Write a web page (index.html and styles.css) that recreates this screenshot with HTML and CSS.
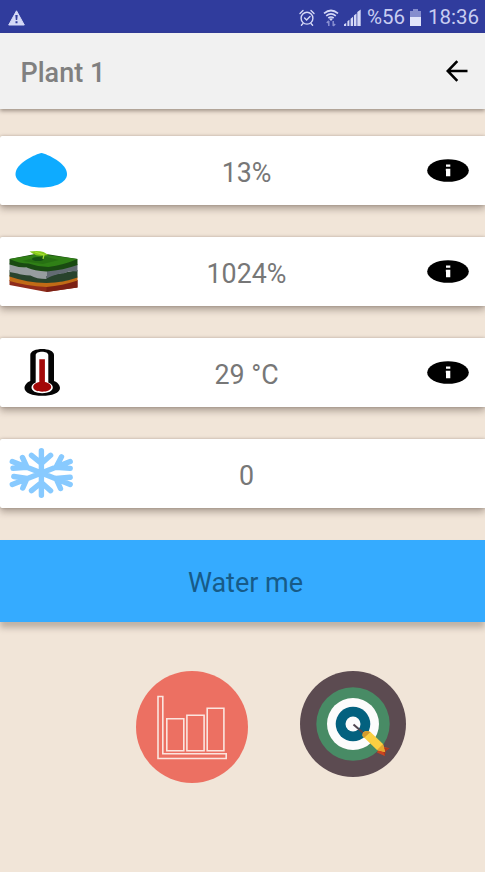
FILE: index.html
```html
<!DOCTYPE html>
<html lang="en">
<head>
<meta charset="utf-8">
<title>Plant 1</title>
<link rel="stylesheet" href="styles.css">
</head>
<body>
<div class="status">
  <svg class="warn" width="17" height="16" viewBox="0 0 17 16"><path d="M8.5 .8 16.3 15H.7Z" fill="#d5d9f6" stroke="#d5d9f6" stroke-linejoin="round"/><path d="M7.3 5h2.4l-.5 5H7.8zM7.5 11.2h2v2h-2z" fill="#303c9d"/></svg>
  <svg class="alarm" width="16" height="18" viewBox="0 0 16 18" fill="none" stroke="#d5d9f6" stroke-width="1.4" stroke-linecap="round"><circle cx="8" cy="9.2" r="5.9"/><path d="m5.6 9 2 2 3.4-3.6M1 4.4 4 1.6M12 1.6l3 2.8M4 14.5l-1.6 1.8M12 14.5l1.6 1.8"/></svg>
  <svg class="wifi" width="16" height="18" viewBox="0 0 16 18" fill="none" stroke="#d5d9f6" stroke-width="1.7"><path d="M1 4.3Q8-1.3 15 4.3M3.2 6.800Q8 3 12.800 6.800M5.300 9Q8 7 10.700 9"/><path d="m8 12-2-2.200Q8 8.700 10 9.800Z" fill="#d5d9f6" stroke="none"/><path d="M5.800 17v-5M3.800 14l2-2.200M10.200 12v5M12.200 15l-2 2" stroke="#8990d0" stroke-width="1.500"/></svg>
  <svg class="signal" width="17" height="17" viewBox="0 0 17 17" fill="#d5d9f6"><path d="M0 17v-1.800L2.200 14v3zM3.400 17v-4.700l2-1.500V17zM6.600 17v-7.300l2.400-2V17zM9.900 17V6.500l2.600-2V17zM13.300 17V3L16.700.5V17z"/></svg>
  <span class="percent">%56</span>
  <svg class="battery" width="11" height="17" viewBox="0 0 11 17"><path d="M3 0h5v2h3v6H0V2h3z" fill="#858dce"/><path d="M0 8h11v9H0z" fill="#e1e4fa"/></svg>
  <span class="time">18:36</span>
</div>
<header class="bar">
  <h1>Plant 1</h1>
  <svg width="22" height="22" viewBox="0 0 22 22" fill="none" stroke="#000" stroke-width="2.6"><path d="M21.500 11H2M11.300 1.200 1.700 11l9.600 9.800"/></svg>
</header>
<main>
  <section class="card">
    <svg width="83" height="69" viewBox="0 0 83 69"><path d="M41.500 17C47 18 67 27 67 38c0 9-13 13.500-25.700 13.500S15.500 47 15.500 38C15.500 27 36 18 41.500 17Z" fill="#0eabff"/></svg>
    <span>13%</span>
    <svg class="info" width="42" height="24" viewBox="0 0 42 24"><ellipse cx="21" cy="11.500" rx="20.800" ry="11.300"/><path d="M19 5.500h4.300v2.300H19zM18.800 9.800h4.500v7.500H19v-5.500h-.2z" fill="#fff"/></svg>
  </section>
  <section class="card">
    <svg width="83" height="69" viewBox="0 0 83 69">
      <path d="m9.500 43 37.200 6 30.800-6v7.500L46.500 55 9.500 48z" fill="#8f2c1b"/>
      <path d="m46.500 49 31-6v7.500l-31 4.500z" fill="#7c2014"/>
      <path d="M9.500 38q18 7 37 7t31-5.500v4q-15 5-31 6.500-20-1-37-6z" fill="#c16b16"/>
      <path d="M9.500 33q18 5 37 6l31-6v7.500q-14 5-31 5.500-20-.5-37-6.500z" fill="#28432c"/>
      <path d="M9.500 26q18 6 37 7v9q-10 0-16-3.500-9-.5-13-2-4-1-8-1.500z" fill="#979d9f"/>
      <path d="m46.500 33 31-6v7.500q-8-1-14 2-7 0-17 5z" fill="#626b72"/>
      <path d="M9.500 22 40 16l37.500 6v6q-14 5-31 6.500-12-.5-20-4-9 0-17-3z" fill="#194a11"/>
      <path d="m9.500 22 30-5 38 5q-14 6-29 8-10 0-20-3.500-9 0-19-4.500z" fill="#2f7f16"/>
      <path d="m22 24 20-5 17 4-16 4z" fill="#277013"/>
      <ellipse cx="38" cy="22" rx="6" ry="2" fill="#145013"/>
      <path d="M29.500 14.500q9-1 14 .5l5 3-5 .5q-7 1-10-1.500z" fill="#83c81c"/>
      <path d="m35 15 9 3-1 4" fill="none" stroke="#a7df32" stroke-width="1.200"/>
    </svg>
    <span>1024%</span>
    <svg class="info" width="42" height="24" viewBox="0 0 42 24"><ellipse cx="21" cy="11.500" rx="20.800" ry="11.300"/><path d="M19 5.500h4.300v2.300H19zM18.800 9.800h4.500v7.500H19v-5.500h-.2z" fill="#fff"/></svg>
  </section>
  <section class="card">
    <svg width="83" height="69" viewBox="0 0 83 69"><path d="M30.300 17c0-8 23.700-8 23.700 0v26c3 1 6 4 6 7 0 5-8 7.800-17.800 7.800S24.500 55 24.500 50c0-3 3-6 5.800-7Z" fill="#050505"/><path d="M35.700 17c0-4.500 12.600-4.500 12.600 0v27.500c3 1 4.500 3 4.500 5 0 3.500-4.500 5.700-10.600 5.700S31.500 53 31.500 49.500c0-2 1.200-4 4.200-5Z" fill="#fff"/><path d="M39.300 21.200h5.600V44c3.500.5 6.300 2.500 6.300 5 0 3-4 4.700-9 4.700s-9-1.700-9-4.700c0-2.500 2.800-4.500 6.100-5z" fill="#a30808"/></svg>
    <span>29 °C</span>
    <svg class="info" width="42" height="24" viewBox="0 0 42 24"><ellipse cx="21" cy="11.500" rx="20.800" ry="11.300"/><path d="M19 5.500h4.300v2.300H19zM18.800 9.800h4.500v7.500H19v-5.500h-.2z" fill="#fff"/></svg>
  </section>
  <section class="card">
    <svg width="83" height="69" viewBox="0 0 83 69" fill="none" stroke="#88caff" stroke-width="5.400" stroke-linecap="round" stroke-linejoin="round"><path d="M41.400 11.700v44.600M31.500 16.300l9.900 8.200 9.200-8.200M31.500 51.700l9.900-8.200 9.200 8.200"/><path d="M12.300 22.500 41.400 34 70.200 45.500M22.500 18.500l4.500 9.700-14 1M70.200 38.300 56 39.500l4.500 10M70.200 22.500 41.400 34 12.300 45.500M61.500 17.800 56 28.200l14.200 1.200M13.800 37.500l13.200 2-4.200 9.500"/></svg>
    <span>0</span>
  </section>
  <button class="water">Water me</button>
  <nav class="actions">
    <svg width="112" height="112" viewBox="0 0 112 112"><circle cx="56" cy="56" r="56" fill="#ec7062"/><path d="M22 25.500h4.800v57.300h63.400v4.700H22zM30.800 47.800h17v32h-17zM50.900 44.300h17.200v35.500H50.900zM71.200 37.200h16.700v42.600H71.200z" fill="none" stroke="#fbe5df" stroke-width="1.600"/></svg>
    <svg width="106" height="106" viewBox="0 0 106 106"><circle cx="53" cy="53" r="53" fill="#5c4b51"/><circle cx="53" cy="53" r="36.700" fill="#488b65"/><circle cx="53" cy="53" r="26" fill="#fcfcfc"/><circle cx="53" cy="53" r="17.300" fill="#03617f"/><circle cx="53" cy="53" r="7.500" fill="#fcfcfc"/><path d="m53.500 53.500 11 9.500" stroke="#514650" stroke-width="2"/><path d="m80 75 9.500 2.200-4 2.800-.7 5-7.800-3.500z" fill="#ca4521"/><path d="m82 77 7.500.2-4 2.800-.7 5z" fill="#ad371d"/><path d="M62.500 65q-.5-5 5-5l3 1L83 73l2 8-8-2z" fill="#fbcf42"/><path d="M62.500 65q-.5-5 5-5l3 1-6.500 6z" fill="#d69a2d"/><path d="m83 73 2 8-8-2z" fill="#e6a62e"/></svg>
  </nav>
</main>
</body>
</html>
```

FILE: styles.css
```css
* { box-sizing: border-box; }
body {
  margin: 0;
  min-height: 872px;
  background: #f1e5d8;
  color: #777;
  font-family: Roboto, sans-serif;
  overflow: hidden;
}
svg { display: block; flex: none; }
.status {
  display: flex;
  align-items: center;
  height: 33px;
  padding: 2px 6px 0 8px;
  background: #303c9d;
  color: #c8cdf1;
  font-size: 20.5px;
  line-height: 31px;
}
.alarm { margin-left: auto; }
.wifi { margin-left: 8px; }
.signal { margin-left: 5px; }
.percent { width: 38px; margin-left: 6px; white-space: nowrap; }
.battery { margin-left: 5px; }
.time { width: 51px; margin-left: 7px; white-space: nowrap; }
.bar {
  display: flex;
  align-items: center;
  justify-content: space-between;
  height: 76px;
  padding: 0 17px 0 20.5px;
  background: #f1f1f1;
  box-shadow: 0 2px 4px rgba(60, 45, 35, .45);
}
h1 { margin: 3px 0 0; font-size: 27px; font-weight: 500; line-height: 32px; color: #808080; }
main { display: flex; flex-direction: column; gap: 32px; padding-top: 27px; }
.card {
  display: grid;
  grid-template-columns: 83px 326px 76px;
  align-items: center;
  height: 69px;
  border-radius: 2px 0 0 2px;
  background: #fff;
  box-shadow: 0 4px 7px rgba(60, 45, 35, .36), 0 0 3px rgba(60, 45, 35, .28);
}
.card span { padding: 4px 0 0 1px; text-align: center; font-size: 26.8px; line-height: 32px; }
.info { margin-left: 18px; }
.water {
  height: 82px;
  padding: 3px 0 0 6px;
  border: 0;
  background: #35abff;
  color: #175b88;
  font: 27px Roboto, sans-serif;
  box-shadow: 0 6px 6px rgba(60, 45, 35, .28);
}
.actions { display: flex; gap: 52px; padding: 17px 0 0 136px; }
```
